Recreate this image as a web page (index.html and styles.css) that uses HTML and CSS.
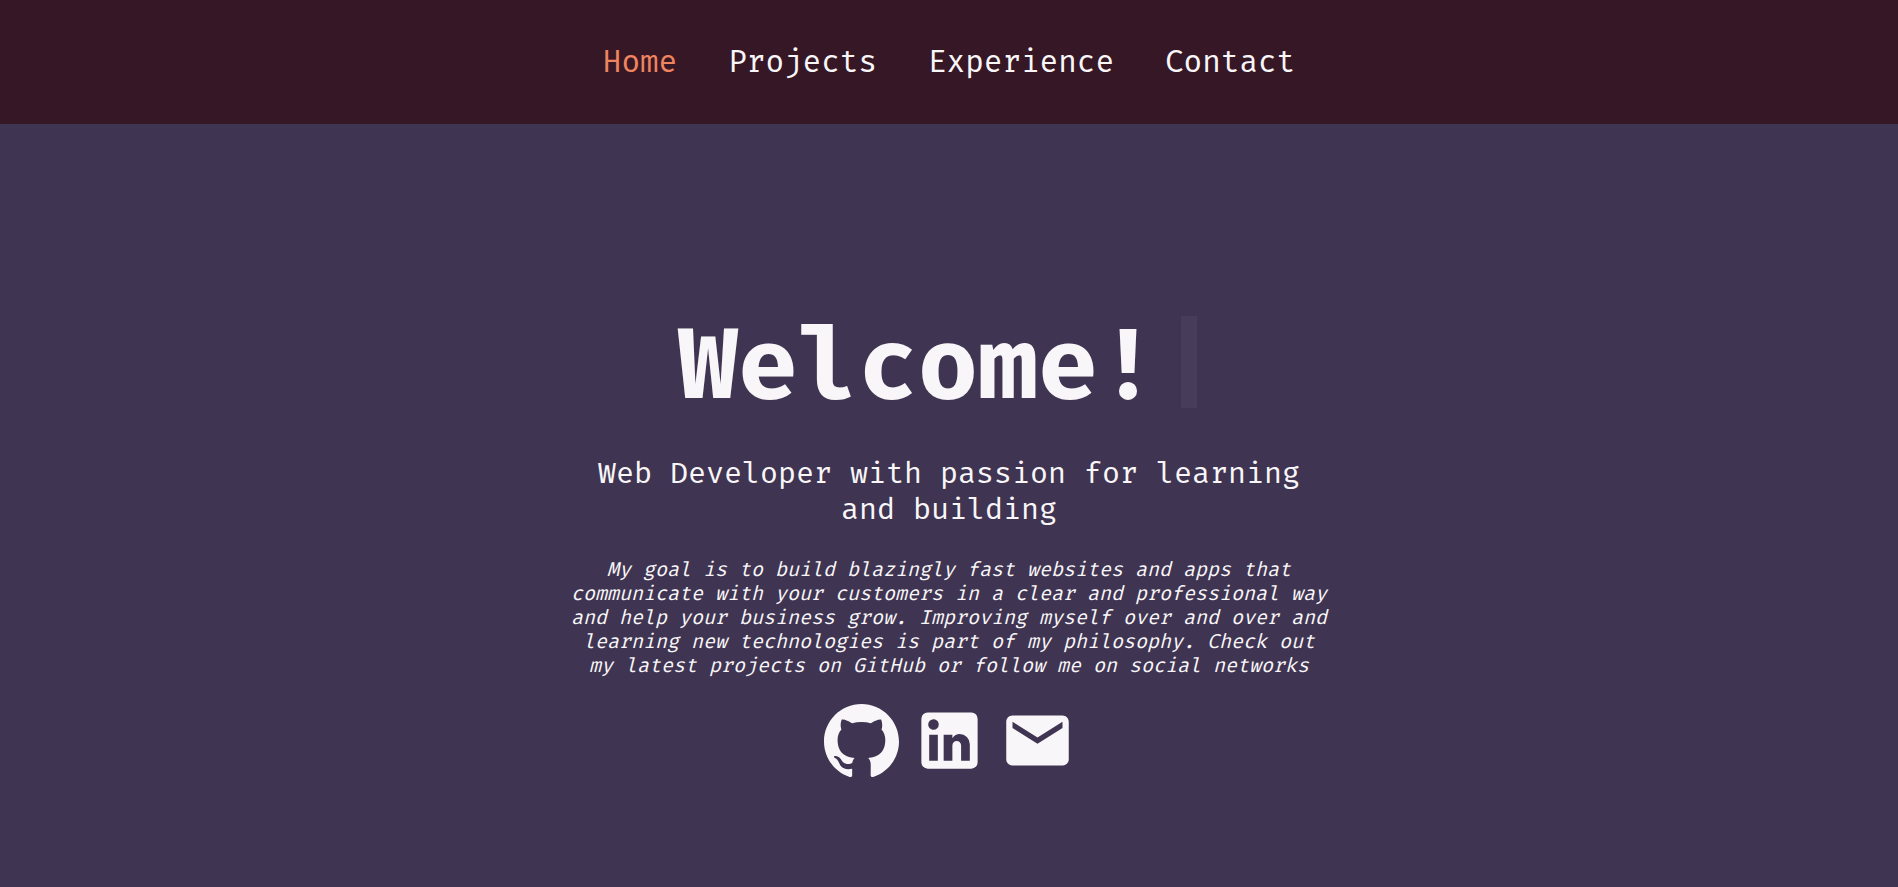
FILE: index.html
```html
<!DOCTYPE html>
<html lang="en">
<head>
<meta charset="utf-8">
<meta name="viewport" content="width=device-width, initial-scale=1">
<title>Portfolio</title>
<link rel="stylesheet" href="styles.css">
</head>
<body>
<header class="header">
  <nav class="nav" aria-label="Main">
    <a class="nav-link active" href="#home" aria-current="page">Home</a>
    <a class="nav-link" href="#projects">Projects</a>
    <a class="nav-link" href="#experience">Experience</a>
    <a class="nav-link" href="#contact">Contact</a>
  </nav>
</header>
<main class="hero" id="home">
  <h1 class="title">Welcome!<span class="cursor"></span></h1>
  <h2 class="subtitle">Web Developer with passion for learning and building</h2>
  <p class="about">My goal is to build blazingly fast websites and apps that communicate with your customers in a clear and professional way and help your business grow. Improving myself over and over and learning new technologies is part of my philosophy. Check out my latest projects on GitHub or follow me on social networks</p>
  <div class="social">
    <a class="social-link" href="#github" aria-label="GitHub">
      <svg viewBox="0 0 24 24"><path d="M12 .297c-6.63 0-12 5.373-12 12 0 5.303 3.438 9.8 8.205 11.385.6.113.82-.258.82-.577 0-.285-.01-1.04-.015-2.04-3.338.724-4.042-1.61-4.042-1.61C4.422 18.07 3.633 17.7 3.633 17.7c-1.087-.744.084-.729.084-.729 1.205.084 1.838 1.236 1.838 1.236 1.07 1.835 2.809 1.305 3.495.998.108-.776.417-1.305.76-1.605-2.665-.3-5.466-1.332-5.466-5.93 0-1.31.465-2.38 1.235-3.22-.135-.303-.54-1.523.105-3.176 0 0 1.005-.322 3.3 1.23.96-.267 1.98-.399 3-.405 1.02.006 2.04.138 3 .405 2.28-1.552 3.285-1.23 3.285-1.23.645 1.653.24 2.873.12 3.176.765.84 1.23 1.91 1.23 3.22 0 4.61-2.805 5.625-5.475 5.92.42.36.81 1.096.81 2.22 0 1.606-.015 2.896-.015 3.286 0 .315.21.69.825.57C20.565 22.092 24 17.592 24 12.297c0-6.627-5.373-12-12-12"/></svg>
    </a>
    <a class="social-link" href="#linkedin" aria-label="LinkedIn">
      <svg viewBox="0 0 24 24"><path d="M19 3a2 2 0 0 1 2 2v14a2 2 0 0 1-2 2H5a2 2 0 0 1-2-2V5a2 2 0 0 1 2-2h14m-.5 15.5v-5.3a3.26 3.26 0 0 0-3.26-3.26c-.85 0-1.84.52-2.32 1.3v-1.11h-2.79v8.37h2.79v-4.93c0-.77.62-1.4 1.39-1.4a1.4 1.4 0 0 1 1.4 1.4v4.93h2.79M6.88 8.56a1.68 1.68 0 0 0 1.68-1.68c0-.93-.75-1.69-1.68-1.69a1.69 1.69 0 0 0-1.69 1.69c0 .93.76 1.68 1.69 1.68m1.39 9.94v-8.37H5.5v8.37h2.77z"/></svg>
    </a>
    <a class="social-link" href="#email" aria-label="Email">
      <svg viewBox="0 0 24 24"><path d="M20 4H4c-1.1 0-2 .9-2 2v12c0 1.1.9 2 2 2h16c1.1 0 2-.9 2-2V6c0-1.1-.9-2-2-2zm0 4l-8 5-8-5V6l8 5 8-5v2z"/></svg>
    </a>
  </div>
</main>
</body>
</html>
```

FILE: styles.css
```css
* {
  box-sizing: border-box;
}

body {
  margin: 0;
  min-height: 100vh;
  background: #3f3451;
  color: #f8f6f8;
  font-family: "Fira Mono", "DejaVu Sans Mono", monospace;
  line-height: 1.2;
}

.header {
  padding: 43px 24px;
  background: #361725;
}

.nav {
  display: flex;
  flex-wrap: wrap;
  justify-content: center;
  gap: 51px;
  font-size: 31px;
  line-height: 38px;
}

.nav-link {
  color: inherit;
  text-decoration: none;
}

.nav-link.active {
  color: #f0845f;
}

.hero {
  display: flex;
  flex-direction: column;
  align-items: center;
  padding: 181px 24px 24px;
  text-align: center;
}

.title {
  display: flex;
  align-items: center;
  margin: 0 0 30px;
  font-size: 100px;
  font-weight: 700;
}

.cursor {
  width: 16px;
  height: 92px;
  margin: 0 23px 6px;
  background: #483c5b;
}

.subtitle {
  width: 40vw;
  min-width: 320px;
  margin: 0 0 30px;
  font-size: 30px;
  font-weight: 400;
}

.about {
  width: 40vw;
  min-width: 320px;
  margin: 0 0 26px;
  font-size: 20px;
  font-style: italic;
}

.social {
  display: flex;
  gap: 13px;
}

.social-link {
  display: flex;
  color: inherit;
}

.social-link svg {
  width: 75px;
  height: 75px;
  fill: currentColor;
}
```
